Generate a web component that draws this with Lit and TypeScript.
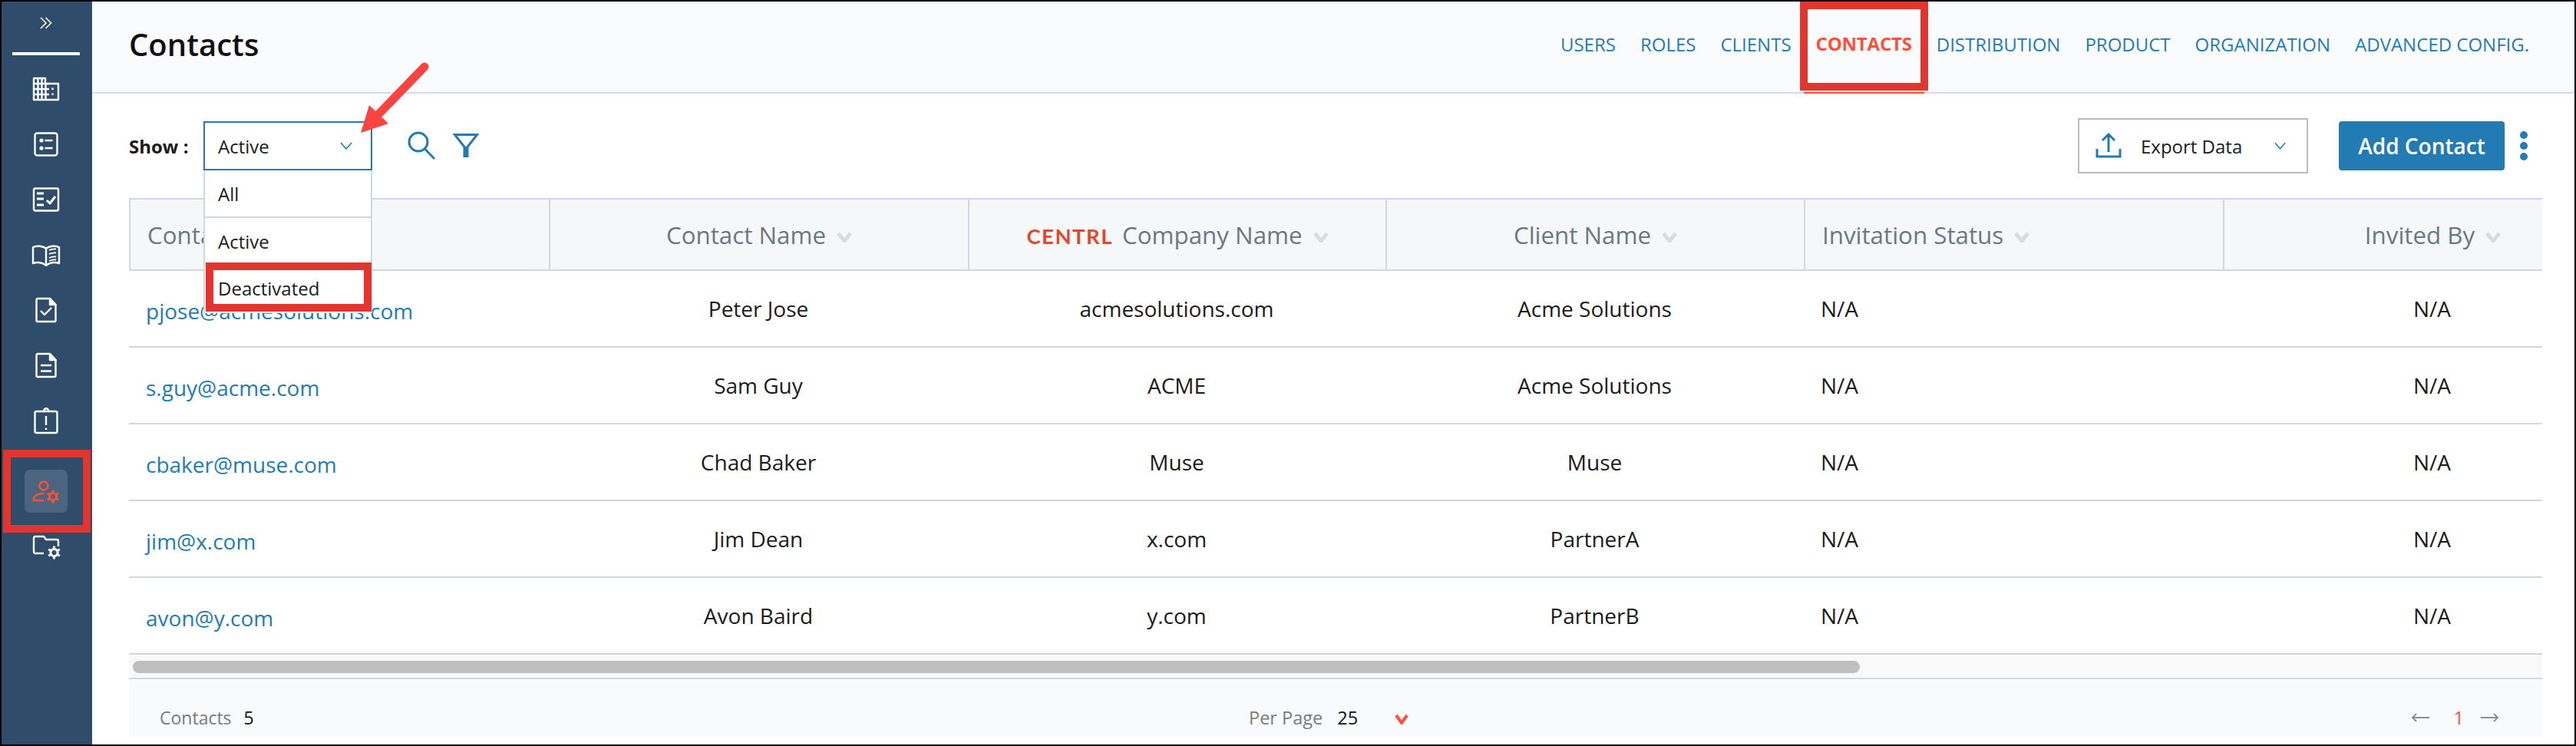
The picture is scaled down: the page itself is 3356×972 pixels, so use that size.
import { LitElement, css, html, svg } from "lit";
import { customElement } from "lit/decorators.js";

const gear = (cx: number, cy: number) => {
    const teeth = [0, 60, 120, 180, 240, 300].map((deg) => {
        const a = (deg - 90) * (Math.PI / 180);
        return svg`<line x1=${cx + 5 * Math.cos(a)} y1=${cy + 5 * Math.sin(a)} x2=${cx + 8.4 * Math.cos(a)} y2=${cy + 8.4 * Math.sin(a)} stroke-width="3"></line>`;
    });
    return svg`<circle cx=${cx} cy=${cy} r="4.6" stroke-width="3"></circle>${teeth}`;
};

const navIcons = [
    svg`<path d="M4 6H19V13H36V34H4Z"></path><path d="M9.500 6V34M14.500 6V34M19.500 13V34M4 13H24M4 20H24M4 27H24"></path><path d="M28.500 18.500V21M28.500 25.500V28"></path>`,
    svg`<rect x="5.500" y="5.500" width="29" height="29" rx="3"></rect><circle cx="14" cy="15" r="1.400"></circle><circle cx="14" cy="25" r="1.400"></circle><path d="M18.500 15H28.500M18.500 25H28.500"></path>`,
    svg`<rect x="4" y="5.500" width="32" height="29" rx="2"></rect><path d="M8 12H17M8 19H17M8 27H17" stroke-width="3"></path><path d="M21 21L25 25L32 16" stroke-width="3"></path>`,
    svg`<path d="M20 12C16 8 8 8 3 10V31C9 29 16 30 20 34C24 30 31 29 37 31V10C32 8 24 8 20 12ZM20 12V34"></path><path d="M24 14C27 12.500 30 12 33 12.500M24 19C27 17.500 30 17 33 17.500M24 24C27 22.500 30 22 33 22.500M24 28C27 26.500 30 26 33 26.500" stroke-width="1.800"></path>`,
    svg`<path d="M9 5H25L32.500 13V33C32.500 34 32 35 31 35H9C8 35 7.500 34 7.500 33V7C7.500 6 8 5 9 5Z"></path><path d="M25 5V13H32.500Z" fill="currentColor"></path><path d="M13 21L18 26L27 17"></path>`,
    svg`<path d="M9 5H25L32.500 13V33C32.500 34 32 35 31 35H9C8 35 7.500 34 7.500 33V7C7.500 6 8 5 9 5Z"></path><path d="M25 5V13H32.500Z" fill="currentColor"></path><path d="M13 20H27M13 27.500H27"></path>`,
    svg`<rect x="5.500" y="8" width="29" height="28" rx="2"></rect><path d="M17 8C17 3 23 3 23 8"></path><path d="M20 14V26M20 29.500V32"></path>`,
    svg`<circle cx="17" cy="13" r="5.500"></circle><path d="M17 23C11 23 4 25 4 30V32H17"></path>${gear(29, 27)}`,
    svg`<path d="M17 27H6C5 27 4 26 4 25V7C4 6 5 5 6 5H17L20 9H34C35 9 36 10 36 11V18"></path>${gear(30.500, 26)}`,
];

const columns = [
    { label: "Contact Email", left: true },
    { label: "Contact Name" },
    { label: "Company Name", brand: true },
    { label: "Client Name" },
    { label: "Invitation Status", left: true },
    { label: "Invited By" },
];

const contacts = [
    ["pjose@acmesolutions.com", "Peter Jose", "acmesolutions.com", "Acme Solutions"],
    ["s.guy@acme.com", "Sam Guy", "ACME", "Acme Solutions"],
    ["cbaker@muse.com", "Chad Baker", "Muse", "Muse"],
    ["jim@x.com", "Jim Dean", "x.com", "PartnerA"],
    ["avon@y.com", "Avon Baird", "y.com", "PartnerB"],
];

const tabs = ["USERS", "ROLES", "CLIENTS", "CONTACTS", "DISTRIBUTION", "PRODUCT", "ORGANIZATION", "ADVANCED CONFIG."];

@customElement("app-root")
export class AppRoot extends LitElement {
    static override styles = css`
        :host {
            display: block;
            position: relative;
            width: 3356px;
            height: 972px;
            font-family: "Open Sans", "Noto Sans", sans-serif;
            color: #1b1b1b;
            background: #fff;
        }

        * {
            box-sizing: border-box;
        }

        .frame {
            display: flex;
            width: 100%;
            height: 100%;
            border: 2px solid #000;
        }

        .sidebar {
            flex: none;
            display: flex;
            flex-direction: column;
            align-items: center;
            width: 118px;
            padding-right: 2px;
            background: #2f4d6b;
            color: #fff;
        }

        .toggle {
            display: flex;
            align-items: center;
            justify-content: center;
            height: 56px;
        }

        .rule {
            flex: none;
            width: 88px;
            height: 4px;
            margin: 10px 0 8px;
            background: #fff;
        }

        .side-item {
            flex: none;
            display: flex;
            align-items: center;
            justify-content: center;
            width: 56px;
            height: 72px;
        }

        .side-item.active {
            height: 72px;
            margin-top: 20px;
            color: #fd5038;
            position: relative;
        }

        .side-item.active::before {
            content: "";
            position: absolute;
            inset: 8px 0;
            border-radius: 7px;
            background: #4b6580;
        }

        .side-item.active svg {
            position: relative;
        }

        .side-item.after {
            margin-top: 2px;
        }

        .side-item svg {
            fill: none;
            stroke: currentColor;
            stroke-width: 2.400;
            stroke-linejoin: round;
        }

        .main {
            flex: 1;
            min-width: 0;
            display: flex;
            flex-direction: column;
        }

        .top {
            flex: none;
            display: flex;
            justify-content: space-between;
            height: 120px;
            padding: 0 43px 0 48px;
            background: #fafbfd;
            border-bottom: 2px solid #d5dce2;
        }

        h1 {
            margin: 0;
            padding-bottom: 8px;
            align-self: center;
            font-size: 40px;
            font-weight: 600;
            color: #111;
        }

        .tabs {
            display: flex;
            margin-bottom: -2px;
        }

        .tab {
            display: flex;
            align-items: center;
            height: 120px;
            padding: 0 16px 10px;
            font-size: 24px;
            color: #237bb3;
        }

        .tab.on {
            font-weight: 700;
            letter-spacing: -0.200px;
            color: #fd5038;
            border-bottom: 2px solid #fd5038;
        }

        .toolbar {
            flex: none;
            display: flex;
            align-items: center;
            height: 136px;
            padding: 0 42px 0 48px;
        }

        .show {
            width: 97px;
            font-size: 24px;
            font-weight: 700;
        }

        .select {
            position: relative;
            display: flex;
            align-items: center;
            justify-content: space-between;
            width: 220px;
            height: 64px;
            padding: 0 24px 0 17px;
            border: 2px solid #237bb3;
            font-size: 24px;
        }

        .menu {
            position: absolute;
            z-index: 3;
            top: 62px;
            left: -2px;
            width: 220px;
            background: #fff;
            border: solid #d0d8de;
            border-width: 0 2px;
        }

        .option {
            display: flex;
            align-items: center;
            height: 62px;
            padding-left: 17px;
            border-bottom: 2px solid #d0d8de;
        }

        .option:last-child {
            padding-bottom: 3px;
            border-bottom: 0;
        }

        .tools {
            display: flex;
            align-items: center;
            gap: 22px;
            margin-left: 45px;
        }

        .spacer {
            flex: 1;
        }

        .export {
            display: flex;
            align-items: center;
            width: 300px;
            height: 72px;
            padding: 0 27px 0 21px;
            border: 2px solid #bbb;
            font-size: 24px;
        }

        .export span {
            flex: 1;
            margin-left: 25px;
        }

        .add {
            display: flex;
            align-items: center;
            justify-content: center;
            width: 216px;
            height: 64px;
            margin-left: 40px;
            border-radius: 4px;
            background: #237bb3;
            color: #fff;
            font-size: 28px;
            font-weight: 600;
        }

        .dots {
            display: flex;
            flex-direction: column;
            gap: 4px;
            margin: 0 19px 0 20px;
        }

        .dots i {
            display: block;
            width: 10px;
            height: 10px;
            border-radius: 50%;
            background: #237bb3;
        }

        .table {
            flex: none;
            overflow: hidden;
            width: 3144px;
            margin-left: 48px;
        }

        .grid {
            display: grid;
            grid-template-columns: 547px 546px 544px 545px 546px 545px;
            width: 3273px;
        }

        .head {
            height: 95px;
            background: #f6f7f9;
            border-top: 2px solid #d0d8de;
            border-bottom: 2px solid #d0d8de;
            border-left: 2px solid #d0d8de;
        }

        .th {
            display: flex;
            align-items: center;
            justify-content: center;
            gap: 14px;
            border-right: 2px solid #d0d8de;
            font-size: 31.300px;
            color: #6b7782;
        }

        .th.left,
        .td.left {
            justify-content: flex-start;
            padding-left: 22px;
        }

        .brand {
            margin-right: 12px;
            font-family: Lato, sans-serif;
            font-size: 27.500px;
            font-weight: 700;
            letter-spacing: 1.500px;
            color: #e0492f;
        }

        .sort {
            fill: none;
            stroke: #d5dce2;
            stroke-width: 5;
            margin-top: 6px;
        }

        .row {
            height: 100px;
            border-bottom: 2px solid #d0d8de;
        }

        .td {
            display: flex;
            align-items: center;
            justify-content: center;
            font-size: 28px;
        }

        .td.mail {
            padding-top: 6px;
            color: #237bb3;
        }

        .track {
            flex: none;
            width: 3144px;
            height: 32px;
            margin-left: 48px;
            padding: 8px 5px;
            background: #f9f9f9;
            border-bottom: 2px solid #d0d8de;
        }

        .thumb {
            width: 2250px;
            height: 16px;
            border-radius: 8px;
            background: #bfbfbf;
        }

        .foot {
            flex: none;
            display: grid;
            grid-template-columns: 1459px auto 1fr;
            align-items: center;
            width: 3144px;
            height: 75px;
            margin-left: 48px;
            padding-top: 24px;
            background: #f9fafc;
            font-size: 23.500px;
            color: #7b7b7b;
        }

        .foot b {
            margin-left: 19px;
            font-weight: 400;
            color: #111;
        }

        .count {
            padding-left: 40px;
            font-size: 23px;
        }

        .count b {
            margin-left: 16px;
        }

        .per {
            display: flex;
            align-items: center;
        }

        .per svg {
            margin: 4px 0 0 48px;
            fill: none;
            stroke: #fd5038;
            stroke-width: 4;
        }

        .pager {
            display: flex;
            align-items: center;
            justify-content: flex-end;
            padding-right: 56px;
        }

        .pager span {
            margin: 0 22px 0 32px;
            color: #fd5038;
        }

        .pager svg {
            fill: none;
            stroke: #8f8f8f;
            stroke-width: 2;
        }

        /* annotations drawn over the screenshot */
        .mark {
            position: absolute;
            z-index: 5;
            border: 10px solid #e1352f;
        }

        .mark.tab-mark {
            left: 2345px;
            top: 2px;
            width: 167px;
            height: 116px;
        }

        .mark.side-mark {
            left: 4px;
            top: 586px;
            width: 114px;
            height: 108px;
        }

        .mark.option-mark {
            left: 268px;
            top: 342px;
            width: 216px;
            height: 64px;
        }

        .arrow {
            position: absolute;
            z-index: 6;
            left: 460px;
            top: 80px;
        }
    `;

    private chevron(w: number, h: number, color: string) {
        return html`<svg width=${w} height=${h} viewBox="0 0 16 10" fill="none" stroke=${color} stroke-width="1.600">
            <path d="M1 1L8 9L15 1"></path>
        </svg>`;
    }

    private sortIcon() {
        return html`<svg class="sort" width="20" height="14" viewBox="0 0 20 14"><path d="M2 2L10 12L18 2"></path></svg>`;
    }

    private renderSidebar() {
        return html`
            <nav class="sidebar">
                <div class="toggle">
                    <svg width="18" height="18" viewBox="0 0 18 18" fill="none" stroke="currentColor" stroke-width="1.600">
                        <path d="M2 2L9 9L2 16M8.500 2L15.500 9L8.500 16"></path>
                    </svg>
                </div>
                <div class="rule"></div>
                ${navIcons.map(
                    (icon, i) => html`<div class="side-item ${i === 7 ? "active" : ""} ${i === 8 ? "after" : ""}">
                        <svg width="40" height="40" viewBox="0 0 40 40">${icon}</svg>
                    </div>`,
                )}
            </nav>
        `;
    }

    private renderToolbar() {
        return html`
            <div class="toolbar">
                <div class="show">Show :</div>
                <div class="select">
                    Active ${this.chevron(16, 10, "#237bb3")}
                    <div class="menu">
                        <div class="option">All</div>
                        <div class="option">Active</div>
                        <div class="option">Deactivated</div>
                    </div>
                </div>
                <div class="tools">
                    <svg width="38" height="38" viewBox="0 0 38 38" fill="none" stroke="#237bb3" stroke-width="3">
                        <circle cx="15" cy="14" r="12"></circle>
                        <path d="M23.500 23L36 36"></path>
                    </svg>
                    <svg width="34" height="34" viewBox="0 0 34 34" fill="none" stroke="#237bb3" stroke-width="3">
                        <path d="M2.500 2.500H31.500L17 21Z"></path>
                        <path d="M17 19V32" stroke-width="7"></path>
                    </svg>
                </div>
                <div class="spacer"></div>
                <div class="export">
                    <svg width="34" height="34" viewBox="0 0 34 34" fill="none" stroke="#237bb3" stroke-width="3">
                        <path d="M17 2V25M9 10L17 2L25 10"></path>
                        <path d="M2 21V31H32V21"></path>
                    </svg>
                    <span>Export Data</span>
                    ${this.chevron(15, 10, "#237bb3")}
                </div>
                <div class="add">Add Contact</div>
                <div class="dots"><i></i><i></i><i></i></div>
            </div>
        `;
    }

    private renderTable() {
        return html`
            <div class="table">
                <div class="grid head">
                    ${columns.map(
                        (col) => html`<div class="th ${col.left ? "left" : ""}">
                            <span>${col.brand ? html`<span class="brand">CENTRL</span>` : ""}${col.label}</span>
                            ${this.sortIcon()}
                        </div>`,
                    )}
                </div>
                ${contacts.map(
                    ([mail, name, company, client]) => html`<div class="grid row">
                        <div class="td left mail">${mail}</div>
                        <div class="td">${name}</div>
                        <div class="td">${company}</div>
                        <div class="td">${client}</div>
                        <div class="td left">N/A</div>
                        <div class="td">N/A</div>
                    </div>`,
                )}
            </div>
            <div class="track"><div class="thumb"></div></div>
            <div class="foot">
                <div class="count">Contacts<b>5</b></div>
                <div class="per">
                    Per Page<b>25</b>
                    <svg width="18" height="14" viewBox="0 0 18 14"><path d="M2 2L9 12L16 2"></path></svg>
                </div>
                <div class="pager">
                    <svg width="24" height="12" viewBox="0 0 24 12"><path d="M24 6H2M7 1L2 6L7 11"></path></svg>
                    <span>1</span>
                    <svg width="24" height="12" viewBox="0 0 24 12"><path d="M0 6H22M17 1L22 6L17 11"></path></svg>
                </div>
            </div>
        `;
    }

    override render() {
        return html`
            <div class="frame">
                ${this.renderSidebar()}
                <div class="main">
                    <header class="top">
                        <h1>Contacts</h1>
                        <div class="tabs">
                            ${tabs.map((t) => html`<div class="tab ${t === "CONTACTS" ? "on" : ""}">${t}</div>`)}
                        </div>
                    </header>
                    ${this.renderToolbar()} ${this.renderTable()}
                </div>
            </div>
            <div class="mark tab-mark"></div>
            <div class="mark side-mark"></div>
            <div class="mark option-mark"></div>
            <svg class="arrow" width="100" height="100" viewBox="0 0 100 100">
                <path d="M93 7L32 70" stroke="#fb4340" stroke-width="11" stroke-linecap="round"></path>
                <path d="M10 93L21 57L46 81Z" fill="#fb4340"></path>
            </svg>
        `;
    }
}
